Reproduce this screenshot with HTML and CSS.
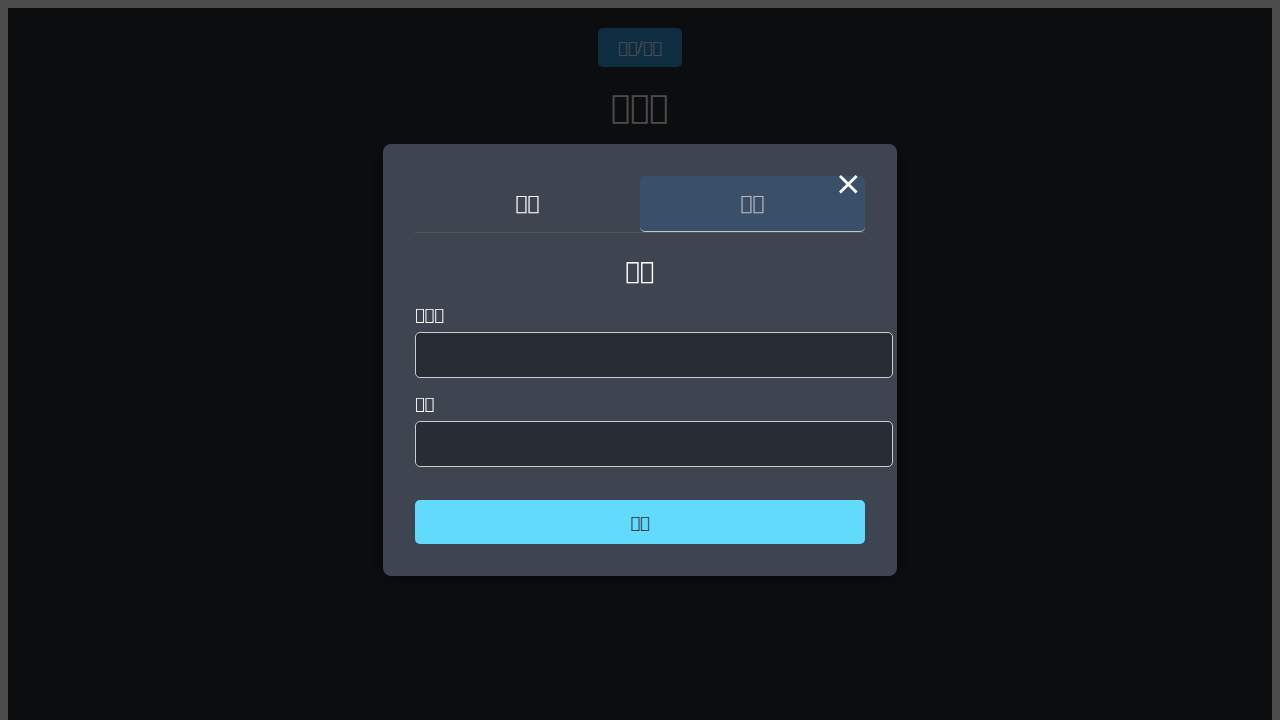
FILE: index.html
```
<!DOCTYPE html>
<html lang="zh">
<head>
<meta charset="utf-8">
<title>App</title>
<link rel="stylesheet" href="styles.css">
</head>
<body>
<main class="app">
  <button class="open-button" type="button">&#xE901;&#xE902;/&#xE903;&#xE904;</button>
  <h1 class="app-title">&#xE905;&#xE906;&#xE907;</h1>
</main>
<div class="overlay">
  <section class="modal" role="dialog" aria-modal="true" aria-labelledby="form-title">
    <button class="close" type="button" aria-label="×">
      <svg width="18" height="18" viewBox="0 0 18 18" aria-hidden="true"><path d="M1 1 17.6 17.6M17.6 1 1 17.6"/></svg>
    </button>
    <div class="tabs" role="tablist">
      <button class="tab" type="button" role="tab" aria-selected="false">&#xE901;&#xE902;</button>
      <button class="tab tab-active" type="button" role="tab" aria-selected="true">&#xE903;&#xE904;</button>
    </div>
    <form class="form">
      <h2 class="form-title" id="form-title">&#xE903;&#xE904;</h2>
      <div class="field">
        <label for="username">&#xE908;&#xE909;&#xE90A;</label>
        <input id="username" type="text">
      </div>
      <div class="field">
        <label for="password">&#xE90B;&#xE90C;</label>
        <input id="password" type="password">
      </div>
      <button class="submit" type="submit">&#xE903;&#xE904;</button>
    </form>
  </section>
</div>
</body>
</html>
```
FILE: styles.css
```
body {
  margin: 8px;
  background: #fff;
  font-family: "DejaVu Sans", sans-serif;
  font-size: 16px;
  overflow: hidden;
}
button, input {
  font-family: inherit;
  font-size: 16px;
}
.app {
  min-height: 100vh;
  box-sizing: border-box;
  padding-top: 20px;
  display: flex;
  flex-direction: column;
  align-items: center;
  background: #282c34;
  color: #fff;
}
.open-button {
  border: 0;
  border-radius: 5px;
  padding: 10px 20px;
  background: #3498db;
  color: #fff;
  text-rendering: optimizeSpeed;
}
.app-title {
  margin: 21px 0;
  font-size: 32px;
  font-weight: 400;
}
.overlay {
  position: fixed;
  inset: 0;
  display: flex;
  align-items: center;
  justify-content: center;
  background: rgba(0, 0, 0, 0.7);
}
.modal {
  position: relative;
  width: 90%;
  max-width: 450px;
  padding: 32px;
  border-radius: 8px;
  background: #3f4451;
  color: #fff;
  box-shadow: 0 4px 15px rgba(0, 0, 0, 0.4);
}
.close {
  position: absolute;
  top: 24px;
  right: 32px;
  padding: 7px 8px;
  border: 0;
  background: none;
  line-height: 0;
}
.close svg {
  overflow: visible;
}
.close path {
  fill: none;
  stroke: #fff;
  stroke-width: 2.8;
}
.tabs {
  display: flex;
  margin-bottom: 24px;
  border-bottom: 1px solid #555;
}
.tab {
  flex: 1;
  padding: 15px 16px 16px;
  border: 0;
  border-bottom: 1px solid transparent;
  border-radius: 5px;
  background: none;
  color: #fff;
  font-size: 20px;
}
.tab-active {
  border-bottom-color: #b5cbd6;
  background: #3a5068;
  color: #bbb;
}
.form-title {
  margin: 0 0 20px;
  font-size: 24px;
  font-weight: 400;
  text-align: center;
}
.field {
  margin-bottom: 16px;
}
.field label {
  display: block;
  margin-bottom: 8px;
}
.field input {
  width: 100%;
  height: 18px;
  padding: 13px;
  border: 1px solid #ccc;
  border-radius: 5px;
  background: #282c34;
  color: #fff;
}
.submit {
  width: 100%;
  margin-top: 17px;
  padding: 13px 12px 11px;
  border: 0;
  border-radius: 5px;
  background: #61dafb;
  color: #282c34;
  line-height: 20px;
}
```
